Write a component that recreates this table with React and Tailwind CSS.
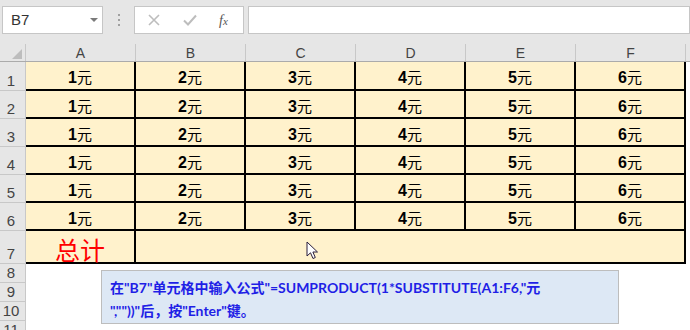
import React from 'react';

const cols = ['A', 'B', 'C', 'D', 'E', 'F'];
const rows = [1, 2, 3, 4, 5, 6];

function RowHead({n, h}) {
  return (
    <div className={`w-[26px] shrink-0 ${h} bg-[#e6e6e6] border-r border-b border-[#c8c8c8] flex items-end justify-center pr-[3px] pb-[1px] text-[15px] leading-none text-[#444]`}>
      <span className="pb-[1px]">{n}</span>
    </div>
  );
}

function Cell({value}) {
  return (
    <div className="w-[110px] shrink-0 h-full bg-[#fff2cc] border-r-2 border-b-2 border-black flex items-center justify-center pt-[4px] text-[16px] leading-none text-black">
      <span className="whitespace-nowrap">
        <span className="font-bold font-['Liberation_Sans']">{value}</span>
        <span className="font-['Noto_Sans_CJK_SC'] text-[15px]">元</span>
      </span>
    </div>
  );
}

function Cursor() {
  return (
    <svg width="13" height="20" viewBox="0 0 13 20" className="absolute left-[306px] top-[241px]">
      <path d="M1 1 L1 15 L4.5 11.8 L7 17.5 L9.3 16.5 L6.9 11 L11.5 11 Z" fill="#fff" stroke="#2a1f3d" strokeWidth="1" strokeLinejoin="round" />
    </svg>
  );
}

export default function App() {
  return (
    <div className="relative w-[690px] h-[330px] overflow-hidden bg-white font-['Liberation_Sans',sans-serif]">
      {/* barra de formulas */}
      <div className="h-[44px] bg-[#e6e6e6] flex items-start pt-[6px]">
        <div className="ml-[2px] w-[101px] h-[28px] bg-white border border-[#c6c6c6] flex items-center justify-between pl-[8px] pr-[4px]">
          <span className="text-[15px] text-[#333]">B7</span>
          <svg width="8" height="5" viewBox="0 0 8 5"><path d="M0 0 L8 0 L4 4 Z" fill="#7a7a7a" /></svg>
        </div>
        <div className="w-[31px] h-[28px] flex flex-col items-center justify-center gap-[3px]">
          <span className="w-[2px] h-[2px] bg-[#a0a0a0]" />
          <span className="w-[2px] h-[2px] bg-[#a0a0a0]" />
          <span className="w-[2px] h-[2px] bg-[#a0a0a0]" />
        </div>
        <div className="w-[110px] h-[28px] bg-white border border-[#c6c6c6] flex items-center">
          <svg width="14" height="14" viewBox="0 0 14 14" className="ml-[12px]"><path d="M2 2 L12 12 M12 2 L2 12" stroke="#bdbdbd" strokeWidth="1.6" /></svg>
          <svg width="16" height="14" viewBox="0 0 16 14" className="ml-[21px]"><path d="M2 7.5 L6 11.5 L14 2.5" stroke="#bdbdbd" strokeWidth="2" fill="none" /></svg>
          <span className="ml-[21px] font-['Liberation_Serif'] italic text-[14px] text-[#555]">f<span className="text-[11px]">x</span></span>
        </div>
        <div className="ml-[4px] flex-1 h-[28px] bg-white border border-[#c6c6c6]" />
      </div>

      {/* encabezados de columna */}
      <div className="flex h-[18px] bg-[#e6e6e6] border-b border-[#ababab]">
        <div className="w-[26px] shrink-0 border-r border-[#c8c8c8] relative">
          <svg width="10" height="10" viewBox="0 0 10 10" className="absolute left-[12px] top-[5px]"><path d="M10 0 L10 10 L0 10 Z" fill="#bdbdbd" /></svg>
        </div>
        {cols.map((c) => (
          <div key={c} className="w-[110px] shrink-0 border-r border-[#c8c8c8] flex items-center justify-center text-[14px] text-[#444] leading-none">
            {c}
          </div>
        ))}
        <div className="flex-1" />
      </div>

      {/* filas de datos */}
      {rows.map((r) => (
        <div key={r} className={`flex ${r === 1 ? 'h-[29px]' : 'h-[28px]'}`}>
          <RowHead n={r} h="h-full" />
          {cols.map((c, i) => (
            <Cell key={c} value={i + 1} />
          ))}
        </div>
      ))}

      <div className="flex h-[33px]">
        <RowHead n={7} h="h-full" />
        <div className="w-[110px] shrink-0 h-full bg-[#fff2cc] border-r-2 border-b-2 border-black flex items-center justify-center pt-[5px] text-[25px] leading-none text-[#ff0000] font-['Noto_Sans_CJK_SC',sans-serif]">
          总计
        </div>
        <div className="w-[550px] shrink-0 h-full bg-[#fff2cc] border-r-2 border-b-2 border-black" />
      </div>

      {[8, 9, 10, 11].map((r) => (
        <div key={r} className="flex h-[19px]">
          <RowHead n={r} h="h-full" />
        </div>
      ))}

      {/* cuadro de texto */}
      <div className="absolute left-[101px] top-[270px] w-[518px] h-[54px] bg-[#dde8f5] border border-[#bdbdbd] pl-[8px] pt-[5px] text-[14px] leading-[23px] font-bold text-[#1f1fe6] font-['Lato','Noto_Sans_CJK_SC',sans-serif] whitespace-nowrap">
        在"B7"单元格中输入公式"=SUMPRODUCT(1*SUBSTITUTE(A1:F6,"元
        <br />
        ",""))"后，按"Enter"键。
      </div>

      <Cursor />
    </div>
  );
}
